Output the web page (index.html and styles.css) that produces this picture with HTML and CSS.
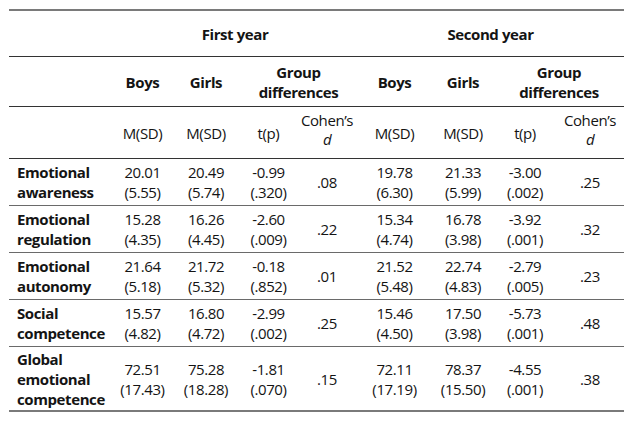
FILE: index.html
```html
<!DOCTYPE html>
<html>
<head>
<meta charset="utf-8">
<link rel="stylesheet" href="styles.css">
</head>
<body>
<table class="stats">
  <colgroup>
    <col class="c-label"><col class="c-boys1"><col class="c-girls1"><col class="c-t1"><col class="c-d1">
    <col class="c-boys2"><col class="c-girls2"><col class="c-t2"><col class="c-d2">
  </colgroup>
  <thead>
    <tr class="h-year">
      <th></th>
      <th colspan="4">First year</th>
      <th colspan="4">Second year</th>
    </tr>
    <tr class="h-group">
      <th></th>
      <th>Boys</th>
      <th>Girls</th>
      <th colspan="2">Group<br>differences</th>
      <th>Boys</th>
      <th>Girls</th>
      <th colspan="2">Group<br>differences</th>
    </tr>
    <tr class="h-stat">
      <td></td>
      <td>M(SD)</td>
      <td>M(SD)</td>
      <td>t(p)</td>
      <td class="cohen">Cohen’s<br><i>d</i></td>
      <td>M(SD)</td>
      <td>M(SD)</td>
      <td>t(p)</td>
      <td class="cohen">Cohen’s<br><i>d</i></td>
    </tr>
  </thead>
  <tbody>
    <tr>
      <th>Emotional<br>awareness</th>
      <td>20.01<br>(5.55)</td><td>20.49<br>(5.74)</td><td>-0.99<br>(.320)</td><td>.08</td>
      <td>19.78<br>(6.30)</td><td>21.33<br>(5.99)</td><td>-3.00<br>(.002)</td><td>.25</td>
    </tr>
    <tr>
      <th>Emotional<br>regulation</th>
      <td>15.28<br>(4.35)</td><td>16.26<br>(4.45)</td><td>-2.60<br>(.009)</td><td>.22</td>
      <td>15.34<br>(4.74)</td><td>16.78<br>(3.98)</td><td>-3.92<br>(.001)</td><td>.32</td>
    </tr>
    <tr>
      <th>Emotional<br>autonomy</th>
      <td>21.64<br>(5.18)</td><td>21.72<br>(5.32)</td><td>-0.18<br>(.852)</td><td>.01</td>
      <td>21.52<br>(5.48)</td><td>22.74<br>(4.83)</td><td>-2.79<br>(.005)</td><td>.23</td>
    </tr>
    <tr>
      <th>Social<br>competence</th>
      <td>15.57<br>(4.82)</td><td>16.80<br>(4.72)</td><td>-2.99<br>(.002)</td><td>.25</td>
      <td>15.46<br>(4.50)</td><td>17.50<br>(3.98)</td><td>-5.73<br>(.001)</td><td>.48</td>
    </tr>
    <tr class="last">
      <th>Global<br>emotional<br>competence</th>
      <td>72.51<br>(17.43)</td><td>75.28<br>(18.28)</td><td>-1.81<br>(.070)</td><td>.15</td>
      <td>72.11<br>(17.19)</td><td>78.37<br>(15.50)</td><td>-4.55<br>(.001)</td><td>.38</td>
    </tr>
  </tbody>
</table>
</body>
</html>
```

FILE: styles.css
```css
html, body {
  margin: 0;
  padding: 0;
  background: #ffffff;
}

body {
  padding: 9px 0 0 9px;
  font-family: "Open Sans", "Noto Sans", sans-serif;
  font-size: 15px;
  letter-spacing: -0.4px;
  color: #141414;
}

.stats {
  border-collapse: collapse;
  width: 615px;
  table-layout: fixed;
  line-height: 20px;
}

.c-label { width: 104px; }
.c-boys1 { width: 59px; }
.c-girls1 { width: 68px; }
.c-t1 { width: 57px; }
.c-d1 { width: 60px; }
.c-boys2 { width: 75px; }
.c-girls2 { width: 62px; }
.c-t2 { width: 62px; }
.c-d2 { width: 68px; }

.stats th,
.stats td {
  padding: 0;
  text-align: center;
  vertical-align: middle;
}

.stats th {
  font-weight: 700;
}

.stats tbody th {
  text-align: left;
  padding-left: 8px;
}

.h-year > * {
  border-top: 2px solid #7a7a7a;
  border-bottom: 1px solid #333333;
  height: 45px;
}

.h-group > * {
  border-bottom: 1px solid #333333;
  height: 49px;
}

.h-stat > * {
  border-bottom: 1px solid #333333;
  height: 47px;
}

.h-stat .cohen {
  line-height: 19px;
  vertical-align: top;
  padding-top: 4px;
}

.stats tbody tr > * {
  border-bottom: 1px solid #6a6a6a;
  height: 46px;
}

.stats tbody tr.last > * {
  border-bottom: 2px solid #7a7a7a;
  height: 63px;
}
```
